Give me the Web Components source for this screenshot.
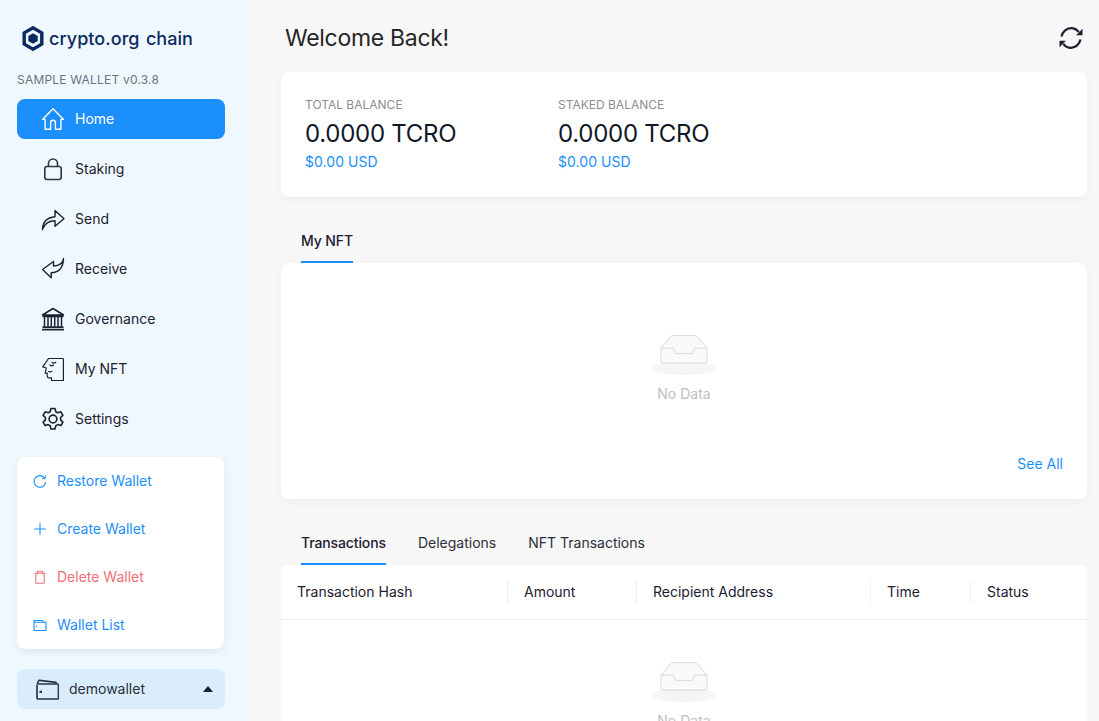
<!DOCTYPE html>
<html lang="en">
<head>
<meta charset="utf-8">
<title>crypto.org chain wallet</title>
<style>
  html, body { margin: 0; height: 721px; overflow: hidden; }
  body { font-family: Inter, "Liberation Sans", sans-serif; color: #1b2130; background: #f7f7f7; }
  wallet-app svg { display: block; }
</style>
</head>
<body>
<wallet-app>
  <wallet-sider slot="sider">
    <nav-item active label="Home"><svg viewBox="0 0 24 24" width="24" height="24" fill="none" stroke="currentColor" stroke-width="1.400" stroke-linejoin="round"><path d="M1.500 12.400 12 1.800l10.500 10.600h-2.600v9.900h-5.500v-6.600a2.300 2.300 0 0 0-4.800 0v6.600H4.100v-9.900z"/></svg></nav-item>
    <nav-item label="Staking"><svg viewBox="0 0 24 24" width="24" height="24" fill="none" stroke="#2b3548" stroke-width="1.600" stroke-linejoin="round"><rect x="3.800" y="9.500" width="16.400" height="13" rx="2.200"/><path d="M7.500 9.500V6.500a4.500 4.500 0 0 1 9 0v3"/></svg></nav-item>
    <nav-item label="Send"><svg viewBox="0 0 24 24" width="24" height="24" fill="none" stroke="#1b2130" stroke-width="1.400" stroke-linejoin="round"><path d="M1.500 22.500c.2-7 3.600-12 12.500-12.800V3.500l9 8.200-9 7.600v-5.500c-6 0-9.800 2.300-11.800 7.200z"/></svg></nav-item>
    <nav-item label="Receive"><svg viewBox="0 0 24 24" width="24" height="24" fill="none" stroke="#1b2130" stroke-width="1.400" stroke-linejoin="round"><path d="M22.500 1.500c-.4 4.800-3.500 7.200-10 7.500V4.500L1.500 12.500l8.700 8.300v-5c7.500-.3 12-5 12.300-14.300z"/></svg></nav-item>
    <nav-item label="Governance"><svg viewBox="0 0 24 24" width="24" height="24" fill="none" stroke="#1b2130" stroke-width="1.500"><path d="M12 1.500 1.500 8h21zM1.500 9.500h21" stroke-linejoin="round"/><path d="M3.500 10v9.500M7 10v9.500M10.300 10v9.500M13.700 10v9.500M17 10v9.500M20.500 10v9.500"/><path d="M1.500 20.200h21M1 22.600h22" stroke-width="1.700"/></svg></nav-item>
    <nav-item label="My NFT"><svg viewBox="0 0 24 24" width="24" height="24" fill="none" stroke="#1b2130" stroke-width="1.200" stroke-linejoin="round" stroke-linecap="round"><path d="M7.500 1.500h14.300a.6.600 0 0 1 .6.600v21.400H10.500V20.800H7.800c-1.200 0-1.600-.8-1.600-1.700v-2.900H4.200L5.300 11 1.800 9.900z"/><path d="M9 8c1 1 2.500 1 3.500 0M11 5.500c1 .7 2.500.7 3.800-.2M7.500 14.500c1.200.6 2.500.5 3.500-.2"/></svg></nav-item>
    <nav-item label="Settings"><svg viewBox="0 0 24 24" width="24" height="24" fill="none" stroke="#1b2130" stroke-width="1.600" stroke-linejoin="round"><path d="M10 1.500h4l.8 3.200 2 1.100 3.100-1 2 3.500-2.300 2.200v2.400l2.300 2.200-2 3.500-3.100-1-2 1.100-.8 3.300h-4l-.8-3.300-2-1.100-3.100 1-2-3.500 2.300-2.200V10.500L2.100 8.300l2-3.500 3.100 1 2-1.100z"/><circle cx="12" cy="12" r="3.900"/></svg></nav-item>
    <wallet-menu slot="footer">
      <menu-row label="Restore Wallet"><svg viewBox="0 0 14 14" width="14" height="14" fill="none" stroke="currentColor" stroke-width="1.100"><path d="M11.800 4.300A5.800 5.800 0 1 0 12.700 8"/><path d="M12.300 1.300v3.400H9" stroke-width="1"/></svg></menu-row>
      <menu-row label="Create Wallet"><svg viewBox="0 0 14 14" width="14" height="14" fill="none" stroke="currentColor" stroke-width="1.100"><path d="M7 1.200v11.600M1.200 7h11.600"/></svg></menu-row>
      <menu-row danger label="Delete Wallet"><svg viewBox="0 0 14 14" width="14" height="14" fill="none" stroke="currentColor" stroke-width="1.100" stroke-linejoin="round"><path d="M1.500 3.300h11M4.500 3.300V1.300h5v2M2.800 3.300v9.200a.7.700 0 0 0 .7.700h7a.7.700 0 0 0 .7-.7V3.300"/></svg></menu-row>
      <menu-row label="Wallet List"><svg viewBox="0 0 14 14" width="14" height="14" fill="none" stroke="currentColor" stroke-width="1.100" stroke-linejoin="round"><path d="M1 4.200h12v8.300H1zM1 4.200V2.500h8.500l1.500 1.700"/><path d="M2.800 8.300h1" stroke-width="1.400"/></svg></menu-row>
    </wallet-menu>
    <wallet-switch slot="footer" name="demowallet"></wallet-switch>
  </wallet-sider>

  <welcome-bar title-text="Welcome Back!"></welcome-bar>

  <balance-card>
    <balance-stat label="TOTAL BALANCE" amount="0.0000 TCRO" usd="$0.00 USD"></balance-stat>
    <balance-stat label="STAKED BALANCE" amount="0.0000 TCRO" usd="$0.00 USD"></balance-stat>
  </balance-card>

  <tab-strip tabs="My NFT"></tab-strip>
  <nft-panel></nft-panel>

  <tab-strip tabs="Transactions|Delegations|NFT Transactions"></tab-strip>
  <tx-table></tx-table>
</wallet-app>

<script>
const INBOX = `<svg viewBox="0 0 64 41" width="64" height="41" fill="none">
  <ellipse cx="32" cy="33" rx="32" ry="7" fill="#f5f5f5"/>
  <path d="M9 13.100 19.400 1.300a2 2 0 0 1 1.500-.7h22.200a2 2 0 0 1 1.500.7L55 13.100V26a2 2 0 0 1-2 2H11a2 2 0 0 1-2-2z" fill="#fafafa" stroke="#d9d9d9"/>
  <path d="M9 13.100h11c1.600 0 2.400 1 2.400 2.500 0 1.700 1 3 2.500 3h14.200c1.500 0 2.500-1.300 2.500-3 0-1.500.8-2.500 2.400-2.500h11" fill="none" stroke="#d9d9d9"/>
</svg>`;

function shadow(el, html) {
  el.attachShadow({ mode: "open" }).innerHTML = html;
}

class WalletApp extends HTMLElement {
  constructor() {
    super();
    shadow(this, `<style>
      :host { display: grid; grid-template-columns: 248px 1fr; height: 721px; overflow: hidden; }
      main { display: block; padding: 0 12px 0 33px; min-width: 0; overflow: hidden; height: 721px; }
    </style>
    <slot name="sider"></slot>
    <main><slot></slot></main>`);
  }
}

class WalletSider extends HTMLElement {
  constructor() {
    super();
    shadow(this, `<style>
      :host { display: block; background: #f0f8ff; height: 721px; box-sizing: border-box; padding: 0 23px 0 17px; }
      .logo { display: flex; align-items: center; gap: 5px; height: 38px; padding: 19px 0 0 5px; font-weight: 500; font-size: 18px; word-spacing: 1.500px; letter-spacing: .05px; color: #0b2a5f; }
      .version { font-size: 12px; line-height: 16px; color: #6b7280; margin-top: 15px; height: 27px; letter-spacing: .2px; }
      nav { display: flex; flex-direction: column; gap: 10px; }
      .footer { display: flex; flex-direction: column; gap: 20px; margin-top: 18px; }
    </style>
    <div class="logo"><svg viewBox="0 0 22 25" width="22" height="25" style="display:block"><path d="M11 1.800 19.800 6.900v11.200L11 23.200 2.200 18.100V6.900z" fill="none" stroke="#0b2a5f" stroke-width="3.400"/><path d="M11 7.300 15.700 10v5L11 17.700 6.300 15v-5z" fill="#0b2a5f"/></svg><span>crypto.org chain</span></div>
    <div class="version">SAMPLE WALLET v0.3.8</div>
    <nav><slot></slot></nav>
    <div class="footer"><slot name="footer"></slot></div>`);
  }
}

class NavItem extends HTMLElement {
  constructor() {
    super();
    shadow(this, `<style>
      :host { display: flex; align-items: center; height: 40px; border-radius: 8px; padding-left: 24px; gap: 10px; font-size: 14px; font-weight: 400; color: #1b2130; }
      :host([active]) { background: #1b8ffb; color: #fff; }
      .icon { width: 24px; height: 24px; display: flex; justify-content: center; align-items: center; }
      .text { padding-bottom: 2px; }
    </style>
    <span class="icon"><slot></slot></span><span class="text">${this.getAttribute("label")}</span>`);
  }
}

class WalletMenu extends HTMLElement {
  constructor() {
    super();
    shadow(this, `<style>
      :host { display: block; width: 207px; background: #fff; border-radius: 8px; box-shadow: 0 3px 10px rgba(30, 50, 80, .09); }
    </style><slot></slot>`);
  }
}

class MenuRow extends HTMLElement {
  constructor() {
    super();
    shadow(this, `<style>
      :host { display: flex; align-items: center; height: 48px; padding-left: 16px; gap: 10px; font-size: 14px; color: #1b8ffb; }
      :host([danger]) { color: #ef6f77; }
      span { padding-bottom: 2px; }
    </style><slot></slot><span>${this.getAttribute("label")}</span>`);
  }
}

class WalletSwitch extends HTMLElement {
  constructor() {
    super();
    shadow(this, `<style>
      :host { display: flex; align-items: center; height: 40px; background: #daedfd; border-radius: 8px; padding: 0 12px 0 19px; gap: 10px; font-size: 14px; color: #2a2f3a; }
      span { flex: 1; padding-bottom: 2px; }
      svg { display: block; }
    </style>
    <svg viewBox="0 0 23 21" width="23" height="21" fill="none" stroke="#2b3548" stroke-width="1.700" stroke-linejoin="round"><path d="M1 5.500v13.500a1 1 0 0 0 1 1h19.500a1 1 0 0 0 1-1V6a1 1 0 0 0-1-1H2"/><path d="M1.200 5 2.500 2a1 1 0 0 1 1-.6l16.500 1.900v1.700"/><path d="M3.500 12.800h2.500" stroke-width="2.200"/></svg>
    <span>${this.getAttribute("name")}</span>
    <svg viewBox="0 0 10 6" width="10" height="6"><path d="M5 0 10 6H0z" fill="#1b2130" stroke="none"/></svg>`);
  }
}

class WelcomeBar extends HTMLElement {
  constructor() {
    super();
    shadow(this, `<style>
      :host { display: flex; align-items: center; justify-content: space-between; height: 72px; padding: 3px 0 0 4px; box-sizing: border-box; }
      h1 { margin: 0; font-size: 23px; font-weight: 400; letter-spacing: -.3px; color: #262626; }
      svg { display: block; margin: 0 4px 0 0; }
    </style>
    <h1>${this.getAttribute("title-text")}</h1>
    <svg viewBox="0 0 24 24" width="24" height="24" fill="none" stroke="#1b2130" stroke-width="2.200"><path d="M2.500 10.500C3.500 5.800 7.300 2.200 12 2.200c3.200 0 6 1.600 7.700 4"/><path d="M21.500 13.500c-1 4.700-4.800 8.300-9.500 8.300-3.200 0-6-1.600-7.700-4"/><path d="M23.500 2.800v6.400h-6.400z" fill="#1b2130" stroke="none"/><path d="M.5 21.200v-6.400h6.400z" fill="#1b2130" stroke="none"/></svg>`);
  }
}

class BalanceCard extends HTMLElement {
  constructor() {
    super();
    shadow(this, `<style>
      :host { display: flex; height: 125px; box-sizing: border-box; background: #fff; border-radius: 8px; padding: 24px; box-shadow: 0 3px 10px rgba(0, 0, 0, .04); }
    </style><slot></slot>`);
  }
}

class BalanceStat extends HTMLElement {
  constructor() {
    super();
    shadow(this, `<style>
      :host { display: block; width: 253px; }
      .label { font-size: 12px; line-height: 18px; color: #8c8c93; }
      .amount { font-size: 24px; line-height: 30px; letter-spacing: -.27px; color: #111827; font-weight: 400; margin-top: 5px; }
      .usd { font-size: 14px; line-height: 20px; color: #1b8ffb; margin-top: 3px; letter-spacing: .04px; }
    </style>
    <div class="label">${this.getAttribute("label")}</div>
    <div class="amount">${this.getAttribute("amount")}</div>
    <div class="usd">${this.getAttribute("usd")}</div>`);
  }
}

class TabStrip extends HTMLElement {
  constructor() {
    super();
    const tabs = this.getAttribute("tabs").split("|");
    shadow(this, `<style>
      :host { display: flex; gap: 32px; padding-left: 20px; height: 66px; align-items: flex-end; box-sizing: border-box; }
      span { display: block; height: 44px; line-height: 43px; box-sizing: border-box; font-size: 14px; color: #2a2f3a; }
      .on { color: #1b2130; font-weight: 500; letter-spacing: -.12px; border-bottom: 2px solid #1b8ffb; }
    </style>${tabs.map((t, i) => `<span class="${i == 0 ? "on" : ""}">${t}</span>`).join("")}`);
  }
}

class EmptyState extends HTMLElement {
  constructor() {
    super();
    shadow(this, `<style>
      :host { display: flex; flex-direction: column; align-items: center; font-size: 14px; line-height: 22px; color: #c0c0c0; }
      svg { display: block; margin-bottom: 7px; }
    </style>${INBOX}<div>No Data</div>`);
  }
}

class NftPanel extends HTMLElement {
  constructor() {
    super();
    shadow(this, `<style>
      :host { display: flex; flex-direction: column; height: 236px; box-sizing: border-box; background: #fff; border-radius: 8px; padding: 72px 24px 24px; box-shadow: 0 3px 10px rgba(0, 0, 0, .04); }
      .all { margin-top: auto; text-align: right; font-size: 14px; line-height: 22px; color: #1b8ffb; }
    </style><empty-state></empty-state><div class="all">See All</div>`);
  }
}

class TxTable extends HTMLElement {
  constructor() {
    super();
    const cols = [["Transaction Hash", 227], ["Amount", 129], ["Recipient Address", 234], ["Time", 100], ["Status", 116]];
    shadow(this, `<style>
      :host { display: block; background: #fff; border-radius: 8px 8px 0 0; height: 200px; }
      .head { display: flex; height: 54px; border-bottom: 1px solid #f0f0f0; }
      .th { display: flex; align-items: center; box-sizing: border-box; padding: 0 0 2px 16px; font-size: 14px; color: #1b2130; position: relative; }
      .th + .th::before { content: ""; position: absolute; left: -1px; top: 16px; height: 22px; width: 1px; background: #f0f0f0; }
      .body { padding-top: 42px; }
    </style>
    <div class="head">${cols.map(c => `<div class="th" style="width:${c[1]}px">${c[0]}</div>`).join("")}</div>
    <div class="body"><empty-state></empty-state></div>`);
  }
}

customElements.define("empty-state", EmptyState);
customElements.define("wallet-app", WalletApp);
customElements.define("wallet-sider", WalletSider);
customElements.define("nav-item", NavItem);
customElements.define("wallet-menu", WalletMenu);
customElements.define("menu-row", MenuRow);
customElements.define("wallet-switch", WalletSwitch);
customElements.define("welcome-bar", WelcomeBar);
customElements.define("balance-card", BalanceCard);
customElements.define("balance-stat", BalanceStat);
customElements.define("tab-strip", TabStrip);
customElements.define("nft-panel", NftPanel);
customElements.define("tx-table", TxTable);
</script>
</body>
</html>
